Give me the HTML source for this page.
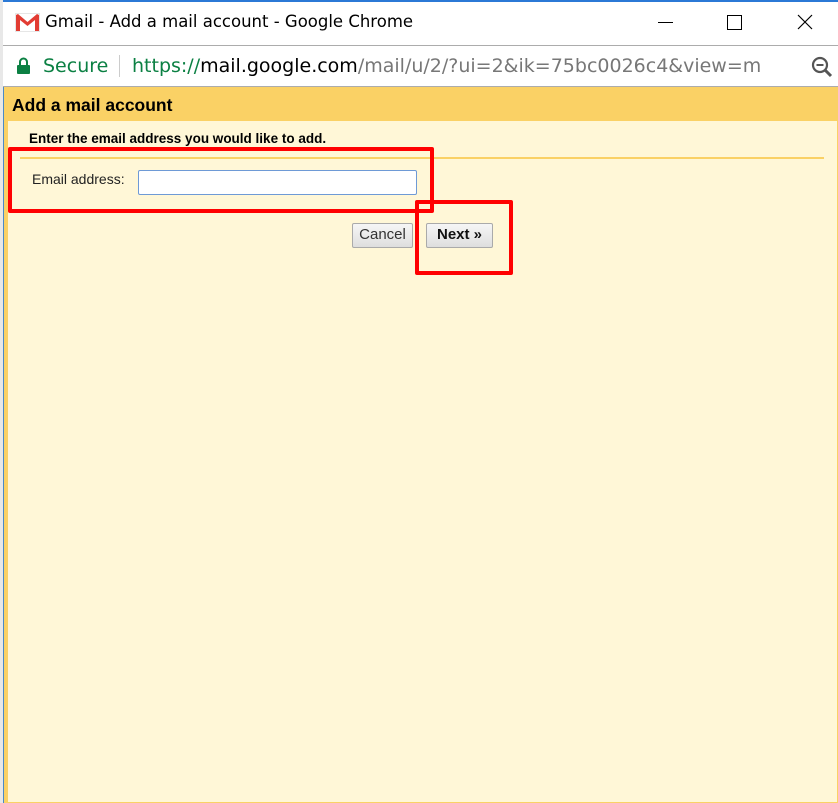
<!DOCTYPE html>
<html><head><style>
*{margin:0;padding:0;box-sizing:border-box}
body{width:838px;height:803px;overflow:hidden;background:#fff;font-family:"Liberation Sans",sans-serif;position:relative}
.abs{position:absolute}
</style></head><body>
<div class="abs" style="left:0;top:0;width:838px;height:2px;background:#2b79d6"></div>
<div class="abs" style="left:0;top:0;width:3px;height:803px;background:#e8e8e8"></div>
<!-- title bar -->
<svg class="abs" style="left:15px;top:13px" width="25" height="19" viewBox="0 0 25 19">
<rect x="0.5" y="0.5" width="24" height="18" fill="#fff" stroke="#e6e6e6"/>
<path d="M1 2 L1 18 L5 18 L5 7 L12.5 13 L20 7 L20 18 L24 18 L24 2 L22 1 L12.5 9 L3 1 Z" fill="#e23c33"/>
</svg>
<div class="abs" style="left:45px;top:12px;font-size:18px;color:#000;font-family:'DejaVu Sans','Liberation Sans',sans-serif;font-size:16.5px">Gmail - Add a mail account - Google Chrome</div>
<div class="abs" style="left:658px;top:22px;width:15px;height:1px;background:#000"></div>
<div class="abs" style="left:727px;top:15px;width:15px;height:15px;border:1px solid #000"></div>
<svg class="abs" style="left:797px;top:14px" width="16" height="16"><path d="M1 1L15 15M15 1L1 15" stroke="#000" stroke-width="1.2"/></svg>
<div class="abs" style="left:3px;top:45px;width:835px;height:1px;background:#acacac"></div>
<!-- address bar -->
<svg class="abs" style="left:17px;top:57px" width="13" height="17"><path d="M3 8V5a3.5 3.5 0 0 1 7 0v3" fill="none" stroke="#0b8043" stroke-width="2"/><rect x="0" y="8" width="13" height="9" rx="1" fill="#0b8043"/></svg>
<div class="abs" style="left:43px;top:55px;font-size:20px;color:#0b8043;font-family:'DejaVu Sans',sans-serif;font-size:19px">Secure</div>
<div class="abs" style="left:119px;top:55px;width:1px;height:22px;background:#ccc"></div>
<div class="abs" style="left:132px;top:55px;font-family:'DejaVu Sans',sans-serif;font-size:19px;color:#777;white-space:nowrap;width:630px;overflow:hidden"><span style="color:#0b8043">https://</span><span style="color:#000">mail.google.com</span>/mail/u/2/?ui=2&amp;ik=75bc0026c4&amp;view=ma</div>
<svg class="abs" style="left:810px;top:55px" width="24" height="24"><circle cx="10" cy="10" r="7" fill="none" stroke="#555" stroke-width="2.2"/><path d="M6.5 10h7" stroke="#555" stroke-width="2"/><path d="M15 15l6 6" stroke="#555" stroke-width="3"/></svg>
<div class="abs" style="left:3px;top:86px;width:835px;height:1px;background:#acacac"></div>
<!-- content -->
<div class="abs" style="left:3px;top:87px;width:835px;height:716px;background:#fad165"></div>
<div class="abs" style="left:3px;top:87px;width:1px;height:716px;background:#4a8ac8"></div>
<div class="abs" style="left:8px;top:121px;width:829px;height:681px;background:#fff7d7"></div>
<div class="abs" style="left:12px;top:95px;font-size:17.5px;font-weight:bold;color:#000">Add a mail account</div>
<div class="abs" style="left:29px;top:131px;font-size:13.5px;font-weight:bold;color:#000">Enter the email address you would like to add.</div>
<div class="abs" style="left:20px;top:157px;width:804px;height:2px;background:#fad165"></div>
<div class="abs" style="left:32px;top:171px;font-size:14px;color:#222">Email address:</div>
<div class="abs" style="left:138px;top:170px;width:279px;height:25px;background:#fff;border:1px solid #6e9ad6;border-radius:2px"></div>
<div class="abs" style="left:352px;top:223px;width:61px;height:25px;background:linear-gradient(#f6f6f6,#dedede);border:1px solid #aaa;border-radius:2px;font-size:15px;color:#333;text-align:center;line-height:22px">Cancel</div>
<div class="abs" style="left:426px;top:223px;width:67px;height:25px;background:linear-gradient(#f6f6f6,#dedede);border:1px solid #aaa;border-radius:2px;font-size:15px;font-weight:bold;color:#111;text-align:center;line-height:22px">Next »</div>
<!-- red boxes -->
<div class="abs" style="left:8px;top:147px;width:426px;height:66px;border:4px solid #f00;border-radius:2px"></div>
<div class="abs" style="left:415px;top:200px;width:98px;height:75px;border:4px solid #f00;border-radius:2px"></div>
</body></html>
